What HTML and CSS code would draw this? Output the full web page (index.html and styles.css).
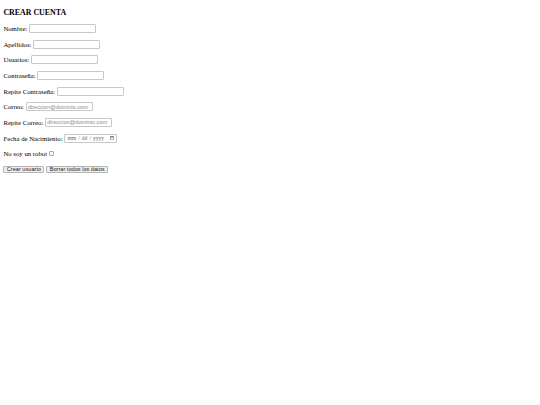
FILE: index.html
```html
<!DOCTYPE html>
<html lang="es">
<head>
<meta charset="utf-8">
<title>Crear cuenta</title>
<link rel="stylesheet" href="styles.css">
</head>
<body class="page">
<h3 class="title">CREAR CUENTA</h3>
<form class="signup">
<p class="row"><label class="lbl" for="nombre">Nombre:</label><input class="field" id="nombre" type="text"></p>
<p class="row"><label class="lbl" for="apellidos">Apellidos:</label><input class="field" id="apellidos" type="text"></p>
<p class="row"><label class="lbl" for="usuario">Usuarios:</label><input class="field" id="usuario" type="text"></p>
<p class="row"><label class="lbl" for="pass">Contraseña:</label><input class="field" id="pass" type="password"></p>
<p class="row"><label class="lbl" for="pass2">Repite Contraseña:</label><input class="field" id="pass2" type="password"></p>
<p class="row"><label class="lbl" for="correo">Correo:</label><input class="field" id="correo" type="email" placeholder="direccion@dominio.com"></p>
<p class="row"><label class="lbl" for="correo2">Repite Correo:</label><input class="field" id="correo2" type="email" placeholder="direccion@dominio.com"></p>
<p class="row"><label class="lbl" for="fecha">Fecha de Nacimiento:</label><input class="field date" id="fecha" type="date"></p>
<p class="row"><label class="lbl" for="robot">No soy un robot</label><input class="check" id="robot" type="checkbox"></p>
<p class="row buttons"><input class="btn" type="submit" value="Crear usuario"><input class="btn" type="reset" value="Borrar todos los datos"></p>
</form>
</body>
</html>
```
FILE: styles.css
```css
html {
  background: #ffffff;
}
.page {
  margin: 0;
  padding: 8.2px 3.375px 0;
  font-family: "Liberation Serif", "Times New Roman", serif;
  font-size: 6.75px;
  color: #000000;
}
.title {
  font-size: 7.9px;
  font-weight: bold;
  line-height: 9px;
  margin: 0 0 6.9px;
}
.signup {
  display: flex;
  flex-direction: column;
  gap: 6.65px;
  margin: 0;
}
.row {
  display: flex;
  align-items: center;
  gap: 1.7px;
  height: 9px;
  margin: 0;
}
.lbl {
  white-space: nowrap;
}
.field {
  box-sizing: border-box;
  width: 67px;
  height: 9px;
  margin: 0;
  padding: 0 1.2px;
  border: 1px solid #c8c8c8;
  border-radius: 1px;
  background: #ffffff;
  font-family: "Liberation Sans", Arial, sans-serif;
  font-size: 5.625px;
  color: #000000;
  outline: none;
}
.field::placeholder {
  color: #8a8a8a;
}
.date {
  width: 52.5px;
  padding: 0 1px 0 1.2px;
  font-family: "Liberation Serif", "Times New Roman", serif;
  color: #6a6a6a;
}
.date::-webkit-datetime-edit {
  padding: 0;
}
.date::-webkit-datetime-edit-fields-wrapper {
  padding: 0;
}
.date::-webkit-datetime-edit-text {
  padding: 0 1px;
}
.date::-webkit-calendar-picker-indicator {
  width: 4.5px;
  height: 4.5px;
  padding: 0;
  margin: 0 0 0 2px;
}
.check {
  appearance: none;
  -webkit-appearance: none;
  box-sizing: border-box;
  width: 5px;
  height: 5px;
  margin: 0 0 0 0.6px;
  border: 1px solid #a8a8a8;
  border-radius: 1px;
  background: #ffffff;
}
.buttons {
  gap: 2.2px;
}
.btn {
  box-sizing: border-box;
  height: 7px;
  margin: 0;
  padding: 0 2.4px;
  border: 1px solid #b4b4b4;
  border-radius: 1px;
  background: #efefef;
  font-family: "Liberation Sans", Arial, sans-serif;
  font-size: 5.625px;
  line-height: 5px;
  color: #1a1a1a;
}
```
